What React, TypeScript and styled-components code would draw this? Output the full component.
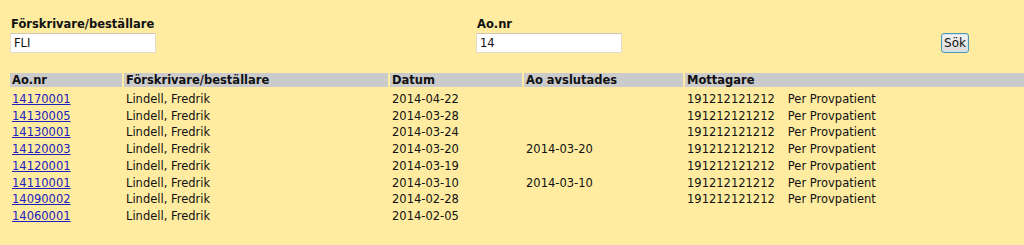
import styled, { createGlobalStyle } from 'styled-components';

interface Order {
  aoNr: string;
  prescriber: string;
  date: string;
  closed?: string;
  pnr?: string;
  patient?: string;
}

const orders: Order[] = [
  { aoNr: '14170001', prescriber: 'Lindell, Fredrik', date: '2014-04-22', pnr: '191212121212', patient: 'Per Provpatient' },
  { aoNr: '14130005', prescriber: 'Lindell, Fredrik', date: '2014-03-28', pnr: '191212121212', patient: 'Per Provpatient' },
  { aoNr: '14130001', prescriber: 'Lindell, Fredrik', date: '2014-03-24', pnr: '191212121212', patient: 'Per Provpatient' },
  { aoNr: '14120003', prescriber: 'Lindell, Fredrik', date: '2014-03-20', closed: '2014-03-20', pnr: '191212121212', patient: 'Per Provpatient' },
  { aoNr: '14120001', prescriber: 'Lindell, Fredrik', date: '2014-03-19', pnr: '191212121212', patient: 'Per Provpatient' },
  { aoNr: '14110001', prescriber: 'Lindell, Fredrik', date: '2014-03-10', closed: '2014-03-10', pnr: '191212121212', patient: 'Per Provpatient' },
  { aoNr: '14090002', prescriber: 'Lindell, Fredrik', date: '2014-02-28', pnr: '191212121212', patient: 'Per Provpatient' },
  { aoNr: '14060001', prescriber: 'Lindell, Fredrik', date: '2014-02-05' },
];

const columns = [
  { title: 'Ao.nr', width: 112 },
  { title: 'Förskrivare/beställare', width: 264 },
  { title: 'Datum', width: 132 },
  { title: 'Ao avslutades', width: 159 },
  { title: 'Mottagare' },
];

const GlobalStyle = createGlobalStyle`
  html, body {
    margin: 0;
    padding: 0;
    background: #ffeca0;
    overflow: hidden;
  }
  body {
    font-family: "DejaVu Sans", Verdana, sans-serif;
    font-size: 11.5px;
    color: #111;
  }
`;

const App = () => {
  return (
    <Page>
      <GlobalStyle />
      <SearchForm onSubmit={(e) => e.preventDefault()}>
        <Field>
          <Label>Förskrivare/beställare</Label>
          <TextInput defaultValue="FLI" />
        </Field>
        <Field>
          <Label>Ao.nr</Label>
          <TextInput defaultValue="14" />
        </Field>
        <SearchButton type="submit">Sök</SearchButton>
      </SearchForm>
      <ResultTable>
        <thead>
          <tr>
            {columns.map((col) => (
              <HeadCell key={col.title} $width={col.width}>
                {col.title}
              </HeadCell>
            ))}
          </tr>
        </thead>
        <tbody>
          {orders.map((order) => (
            <tr key={order.aoNr}>
              <Cell>
                <OrderLink href="#">{order.aoNr}</OrderLink>
              </Cell>
              <Cell>{order.prescriber}</Cell>
              <Cell>{order.date}</Cell>
              <Cell>{order.closed}</Cell>
              <Cell>
                {order.pnr}
                {order.patient && <PatientName>{order.patient}</PatientName>}
              </Cell>
            </tr>
          ))}
        </tbody>
      </ResultTable>
    </Page>
  );
};

export default App;

const Page = styled.div`
  padding: 8px 0 8px 8px;
  width: 1024px;
  box-sizing: border-box;
`;

const SearchForm = styled.form`
  display: grid;
  grid-template-columns: 466px 465px auto;
  align-items: end;
  margin: 9px 0 0 2px;
`;

const Field = styled.div`
  display: flex;
  flex-direction: column;
  gap: 2px;
`;

const Label = styled.label`
  font-weight: bold;
  font-size: 11.5px;
  line-height: 14px;
  padding-left: 1px;
  color: #111;
`;

const TextInput = styled.input`
  width: 146px;
  height: 20px;
  box-sizing: border-box;
  margin: 0;
  padding: 0 3px;
  border: 1px solid #e4dccb;
  border-top-color: #cfc8b8;
  background: #fff;
  font-family: "DejaVu Sans", Verdana, sans-serif;
  font-size: 11.5px;
  color: #111;
  outline: none;
`;

const SearchButton = styled.button`
  width: 28px;
  height: 20px;
  margin: 0;
  padding: 0;
  box-sizing: border-box;
  border: 1px solid #4f96b4;
  border-radius: 3px;
  background: linear-gradient(#f4f4f4, #dadada);
  box-shadow: inset 0 0 0 1px #cfe6ef;
  font-family: "DejaVu Sans", Verdana, sans-serif;
  font-size: 12px;
  color: #111;
  cursor: pointer;
`;

const ResultTable = styled.table`
  margin-top: 18px;
  width: 1020px;
  border-collapse: separate;
  border-spacing: 2px;
  table-layout: fixed;
`;

const HeadCell = styled.th<{ $width?: number }>`
  ${({ $width }) => ($width ? `width: ${$width}px;` : '')}
  box-sizing: border-box;
  height: 17px;
  padding: 0 2px;
  border-bottom: 3px solid transparent;
  background: #cbcbcb;
  background-clip: padding-box;
  text-align: left;
  font-size: 11.5px;
  font-weight: bold;
  line-height: 14px;
  white-space: nowrap;
`;

const Cell = styled.td`
  padding: 0 2px;
  height: 14.7px;
  line-height: 14.7px;
  white-space: nowrap;
  vertical-align: middle;
`;

const OrderLink = styled.a`
  color: #2020c0;
  text-decoration: underline;
`;

const PatientName = styled.span`
  padding-left: 13px;
`;
